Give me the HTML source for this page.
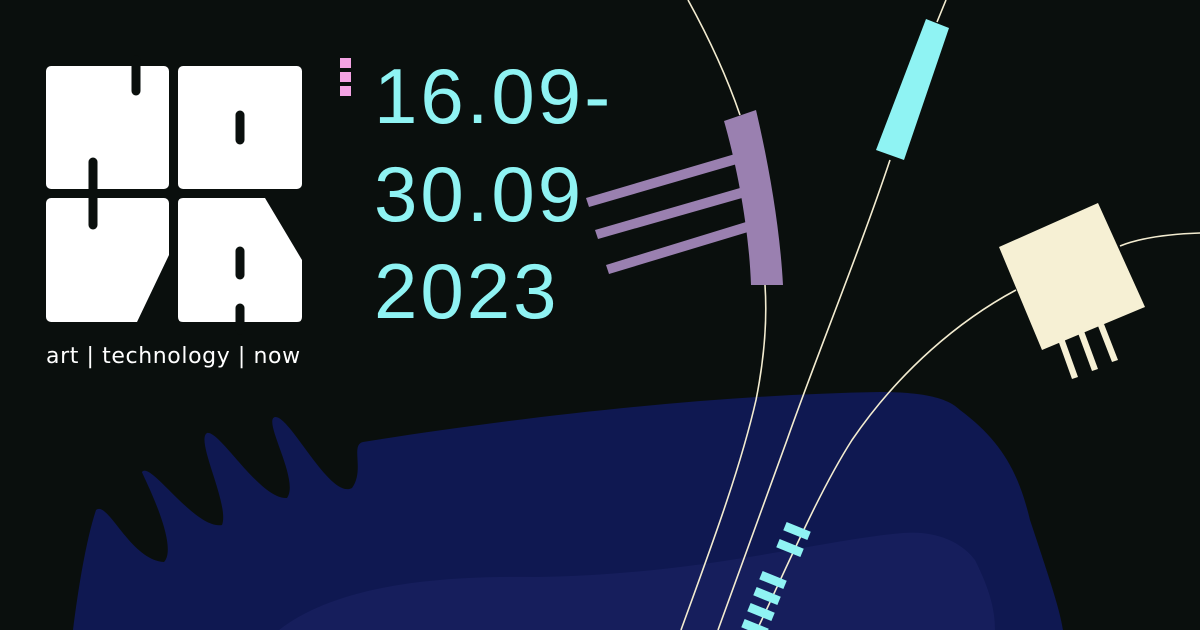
<!DOCTYPE html>
<html><head><meta charset="utf-8"><style>
html,body{margin:0;padding:0;background:#0a0f0d;}
body{width:1200px;height:630px;overflow:hidden;position:relative;font-family:"Liberation Sans","DejaVu Sans",sans-serif;}
.date{position:absolute;left:374px;color:#8ff3f3;font-family:"Liberation Sans",sans-serif;font-size:78px;letter-spacing:3px;line-height:1;}
.tag{position:absolute;left:46px;top:346px;color:#fff;font-family:"DejaVu Sans","Liberation Sans",sans-serif;font-size:22px;letter-spacing:0.6px;line-height:1;white-space:nowrap;}
</style></head><body>
<svg width="1200" height="630" style="position:absolute;left:0;top:0">
<path d="M73,630 C78,590 86,540 96,510 C108,500 130,560 164,562 C180,545 140,470 142,472 C150,460 195,530 222,525 C230,505 195,440 207,433 C220,430 260,500 287,498 C300,480 262,420 275,417 C290,415 330,500 352,488 C365,470 350,445 363,442 C500,420 700,395 880,392 C930,392 950,400 960,410 C1000,440 1018,470 1030,520 C1050,580 1060,610 1063,630 Z" fill="#0f1851"/>
<path d="M279,630 C330,590 420,575 535,577 C700,575 820,540 903,533 C940,530 964,545 975,560 C990,590 995,610 995,630 Z" fill="#161e5c"/>
<g fill="none" stroke="#f3ecd0" stroke-width="1.6">
<path d="M688,0 C710,40 728,80 740,115 M765,285 C768,330 762,370 756,400 C740,470 710,550 681,630"/>
<path d="M946,0 L937,22 M890,160 C860,250 815,360 787,440 L718,630"/>
<path d="M1200,233 C1170,234 1140,238 1120,246 M1016,290 C960,320 900,370 852,440 C820,490 790,560 757,630"/>
</g>
<g fill="#9a80b0">
<path d="M724,121 L756,110 C770,170 780,230 783,285 L751,285 C749,230 738,170 724,121 Z"/>
<path d="M586,198 L735,154 L737,164 L589,207 Z"/>
<path d="M595,230 L740,188 L742,198 L598,239 Z"/>
<path d="M606,265 L746,222 L748,232 L609,274 Z"/>
</g>
<path d="M926,19 L949,28 L904,160 L876,150 Z" fill="#8ff3f3"/>
<g fill="#f6f0d4">
<path d="M999,247 L1098,203 L1145,307 L1042,350 Z"/>
<path d="M1058,340 L1064,338 L1078,377 L1072,379 Z"/>
<path d="M1078,333 L1084,331 L1098,369 L1092,371 Z"/>
<path d="M1098,326 L1104,324 L1118,360 L1112,362 Z"/>
</g>
<g fill="#8ff3f3">
<rect x="-13" y="-4.5" width="26" height="9" transform="translate(797,531) rotate(22)"/>
<rect x="-13" y="-4.5" width="26" height="9" transform="translate(790,548) rotate(22)"/>
<rect x="-13" y="-4.5" width="26" height="9" transform="translate(773,580) rotate(22)"/>
<rect x="-13" y="-4.5" width="26" height="9" transform="translate(767,596) rotate(22)"/>
<rect x="-13" y="-4.5" width="26" height="9" transform="translate(761,612) rotate(22)"/>
<rect x="-13" y="-4.5" width="26" height="9" transform="translate(755,628) rotate(22)"/>
</g>
<g fill="#f4a3e3">
<rect x="340" y="58" width="11" height="10"/>
<rect x="340" y="72" width="11" height="10"/>
<rect x="340" y="86" width="11" height="10"/>
</g>
<g fill="#fff">
<rect x="46" y="66" width="123" height="123" rx="5"/>
<rect x="178" y="66" width="124" height="123" rx="5"/>
<rect x="46" y="198" width="123" height="124" rx="5"/>
<path d="M183,198 L265,198 L302,260 L302,317 Q302,322 297,322 L183,322 Q178,322 178,317 L178,203 Q178,198 183,198 Z"/>
</g>
<path d="M169,255 L169,322 L137,322 Z" fill="#0a0f0d"/>
<g stroke="#0a0f0d" stroke-width="9" stroke-linecap="round">
<line x1="136" y1="60" x2="136" y2="91"/>
<line x1="93" y1="162" x2="93" y2="225"/>
<line x1="240" y1="115" x2="240" y2="140"/>
<line x1="240" y1="251" x2="240" y2="275"/>
<line x1="240" y1="308" x2="240" y2="330"/>
</g>
</svg>
<div class="date" style="top:57px">16.09-</div>
<div class="date" style="top:155px">30.09</div>
<div class="date" style="top:252px">2023</div>
<div class="tag">art | technology | now</div>
</body></html>
